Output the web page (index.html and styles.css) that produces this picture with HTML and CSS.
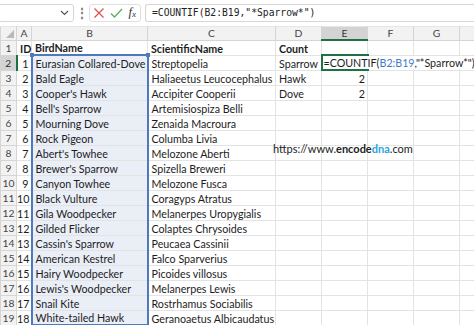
FILE: index.html
```html
<!DOCTYPE html>
<html>
<head>
<meta charset="utf-8">
<link rel="stylesheet" href="styles.css">
</head>
<body>
<div class="fbar">
  <div class="namebox"><svg class="chev" width="9" height="6" viewBox="0 0 9 6"><path d="M1 1l3.5 3.5L8 1" fill="none" stroke="#555" stroke-width="1.2"/></svg></div>
  <div class="dots">⋮</div>
  <div class="btns">
    <svg width="12" height="12" viewBox="0 0 12 12"><path d="M1.5 1.5l9 9M10.5 1.5l-9 9" stroke="#d9534f" stroke-width="1.3"/></svg>
    <svg width="13" height="12" viewBox="0 0 13 12"><path d="M1 6.5l3.5 3.5L12 2" fill="none" stroke="#5cae63" stroke-width="1.3"/></svg>
    <span class="fx">f<sub>x</sub></span>
  </div>
  <div class="finput">=COUNTIF(B2:B19,"*Sparrow*")</div>
</div>
<div class="sheet">
<table>
<colgroup><col class="c0"><col class="ca"><col class="cb"><col class="cc"><col class="cd"><col class="ce"><col class="cf"><col class="cg"><col class="ch"></colgroup>
<tr class="hdr"><th class="corner"><span class="tri"></span></th><th>A</th><th>B</th><th>C</th><th>D</th><th class="sel">E</th><th>F</th><th>G</th><th></th></tr>
<tr><th>1</th><td class="b">ID</td><td class="b">BirdName</td><td class="b">ScientificName</td><td class="b">Count</td><td></td><td></td><td></td><td></td></tr>
<tr><th class="selr">2</th><td class="n">1</td><td class="rg top">Eurasian Collared-Dove<i class="h tl"></i><i class="h tr"></i></td><td>Streptopelia</td><td>Sparrow</td><td class="act"><span class="editor">=COUNTIF(<span class="ref">B2:B19</span>,"*Sparrow*")<i class="caret"></i></span></td><td></td><td></td><td></td></tr>
<tr><th>3</th><td class="n">2</td><td class="rg">Bald Eagle</td><td>Haliaeetus Leucocephalus</td><td>Hawk</td><td class="n">2</td><td></td><td></td><td></td></tr>
<tr><th>4</th><td class="n">3</td><td class="rg">Cooper's Hawk</td><td>Accipiter Cooperii</td><td>Dove</td><td class="n">2</td><td></td><td></td><td></td></tr>
<tr><th>5</th><td class="n">4</td><td class="rg">Bell's Sparrow</td><td>Artemisiospiza Belli</td><td></td><td></td><td></td><td></td><td></td></tr>
<tr><th>6</th><td class="n">5</td><td class="rg">Mourning Dove</td><td>Zenaida Macroura</td><td></td><td></td><td></td><td></td><td></td></tr>
<tr><th>7</th><td class="n">6</td><td class="rg">Rock Pigeon</td><td>Columba Livia</td><td></td><td></td><td></td><td></td><td></td></tr>
<tr><th>8</th><td class="n">7</td><td class="rg">Abert's Towhee</td><td>Melozone Aberti</td><td></td><td></td><td></td><td></td><td></td></tr>
<tr><th>9</th><td class="n">8</td><td class="rg">Brewer's Sparrow</td><td>Spizella Breweri</td><td></td><td></td><td></td><td></td><td></td></tr>
<tr><th>10</th><td class="n">9</td><td class="rg">Canyon Towhee</td><td>Melozone Fusca</td><td></td><td></td><td></td><td></td><td></td></tr>
<tr><th>11</th><td class="n">10</td><td class="rg">Black Vulture</td><td>Coragyps Atratus</td><td></td><td></td><td></td><td></td><td></td></tr>
<tr><th>12</th><td class="n">11</td><td class="rg">Gila Woodpecker</td><td>Melanerpes Uropygialis</td><td></td><td></td><td></td><td></td><td></td></tr>
<tr><th>13</th><td class="n">12</td><td class="rg">Gilded Flicker</td><td>Colaptes Chrysoides</td><td></td><td></td><td></td><td></td><td></td></tr>
<tr><th>14</th><td class="n">13</td><td class="rg">Cassin's Sparrow</td><td>Peucaea Cassinii</td><td></td><td></td><td></td><td></td><td></td></tr>
<tr><th>15</th><td class="n">14</td><td class="rg">American Kestrel</td><td>Falco Sparverius</td><td></td><td></td><td></td><td></td><td></td></tr>
<tr><th>16</th><td class="n">15</td><td class="rg">Hairy Woodpecker</td><td>Picoides villosus</td><td></td><td></td><td></td><td></td><td></td></tr>
<tr><th>17</th><td class="n">16</td><td class="rg">Lewis's Woodpecker</td><td>Melanerpes Lewis</td><td></td><td></td><td></td><td></td><td></td></tr>
<tr><th>18</th><td class="n">17</td><td class="rg">Snail Kite</td><td>Rostrhamus Sociabilis</td><td></td><td></td><td></td><td></td><td></td></tr>
<tr><th>19</th><td class="n">18</td><td class="rg bot">White-tailed Hawk</td><td>Geranoaetus Albicaudatus</td><td></td><td></td><td></td><td></td><td></td></tr>
</table>
<div class="wm">https://www.<b>encode</b><b class="dna">dna</b>.com</div>
</div>
</body>
</html>
```
FILE: styles.css
```css
html, body { margin: 0; padding: 0; }
body {
  width: 474px; height: 325px; overflow: hidden; background: #fff;
  font-family: Lato, "Liberation Sans", sans-serif; color: #1d1d1d;
}
.fbar { display: flex; align-items: center; height: 25px; }
.namebox {
  width: 76px; height: 18px; margin-left: -2px; box-sizing: border-box;
  border: 1px solid #d6d6d6; border-radius: 3px;
  display: flex; align-items: center; justify-content: flex-end; padding-right: 4px;
}
.dots { width: 15px; text-align: center; color: #777; font-size: 12px; font-weight: bold; }
.btns {
  width: 52px; height: 18px; box-sizing: border-box; border: 1px solid #e0e0e0; border-radius: 3px;
  display: flex; align-items: center; justify-content: space-between; padding: 0 4px 0 3px;
}
.fx { font-family: "Liberation Serif", serif; font-style: italic; font-size: 12.5px; color: #333; }
.fx sub { font-size: 9px; vertical-align: -1px; }
.finput {
  flex: 1; margin-left: 4px; height: 18px; box-sizing: border-box; border: 1px solid #d6d6d6; border-right: 0;
  border-radius: 3px 0 0 3px; padding-left: 6px; line-height: 16px;
  font-family: "DejaVu Sans Mono", monospace; font-size: 9.7px; color: #222;
}
.sheet { position: relative; margin-top: 1px; }
table { border-collapse: collapse; table-layout: fixed; width: 480px; }
col.c0 { width: 16px; } col.ca { width: 15px; } col.cb { width: 116px; } col.cc { width: 128px; }
col.cd, col.ce, col.cf, col.cg { width: 46px; } col.ch { width: 21px; }
tr { height: 15px; }
tr.hdr { height: 13px; }
th, td { padding: 0; white-space: nowrap; overflow: visible; font-size: 10.7px; line-height: 13px; vertical-align: bottom; }
td { border: 1px solid #e3e3e3; padding-left: 3px; }
th { background: #f2f2f2; border: 1px solid #d5d5d5; color: #444; font-weight: normal; text-align: center; font-size: 10.3px; }
tr.hdr th { border-top: 1px solid #e6e6e6; vertical-align: middle; line-height: 12px; }
th.corner { position: relative; }
.tri { position: absolute; right: 2px; bottom: 2px; width: 0; height: 0; border-left: 8px solid transparent; border-bottom: 8px solid #b9b9b9; }
th.sel { background: #d3d3d3; border-bottom: 2px solid #1e7145; color: #333; }
th.selr { background: #d3d3d3; border-right: 2px solid #1e7145; color: #333; }
td.b { font-weight: bold; }
td.n { text-align: right; padding-left: 0; padding-right: 2px; }
td.rg { background: #e9eef7; border-left: 2px solid #4f78bd; border-right: 2px solid #4f78bd; }
td.top { border-top: 2px solid #4f78bd; position: relative; }
td.bot { border-bottom: 2px solid #4f78bd; }
.h { position: absolute; width: 4px; height: 4px; background: #4f78bd; top: -3px; }
.h.tl { left: -3px; } .h.tr { right: -3px; }
td.act { position: relative; border: 2px solid #1e7145; }
.editor {
  position: absolute; left: 0; top: 0; height: 13px; width: 150px; background: #fff; padding-left: 1px;
  line-height: 13px; color: #1d1d1d;
}
.ref { color: #3f7bc8; }
.caret { display: inline-block; width: 1px; height: 12px; background: #111; vertical-align: -2px; margin-left: 1px; }
.wm { position: absolute; left: 273px; top: 116px; font-size: 11px; color: #222; }
.wm .dna { color: #27a3dc; }
```
